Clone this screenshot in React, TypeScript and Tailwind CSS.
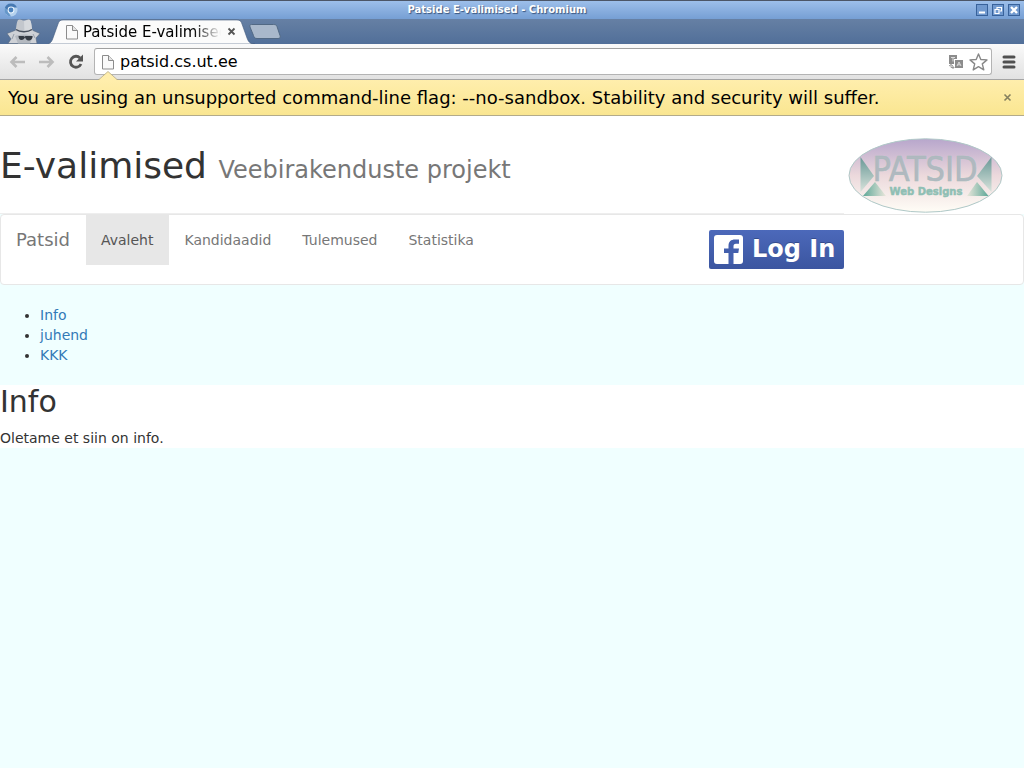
import type { ReactNode } from "react";

function PageIcon() {
  return (
    <svg width="12" height="16" viewBox="0 0 12 16" fill="#fafafa" stroke="#8c8c8c" className="shrink-0" aria-hidden="true">
      <path d="M.5 1.5h6l5 5v8.5H.5z" />
      <path d="M6.5 1.5v5h5" fill="#e4e4e4" />
    </svg>
  );
}

function WindowButton({ label, children }: { label: string; children: ReactNode }) {
  return (
    <button type="button" aria-label={label} className="flex h-3 w-3 items-center justify-center border border-[#38629b] bg-[#7099cf]">
      <svg width="10" height="10" viewBox="0 0 10 10" fill="none" stroke="#fff" aria-hidden="true">
        {children}
      </svg>
    </button>
  );
}

function TitleBar() {
  return (
    <div className="flex h-[19px] items-center border-t border-[#4c5667] bg-linear-to-b from-[#9dbfea] to-[#769fd4] pl-1">
      <svg width="14" height="14" viewBox="0 0 14 14" className="shrink-0" aria-hidden="true">
        <circle cx="7" cy="7" r="6.5" fill="#b5d2ee" />
        <path d="M.8 5A6.500 6.500 0 0 1 13 4.500H7L4 8z" fill="#4679b2" />
        <path d="M.8 5 4 8.500 7 13.500A6.500 6.500 0 0 1 .8 5z" fill="#6597ca" />
        <circle cx="7" cy="7" r="3.400" fill="#eaf4fd" />
        <circle cx="7" cy="7" r="2.400" fill="#4b82bd" />
      </svg>
      <div className="flex-1 text-center text-[10px] leading-4 font-bold text-white [text-shadow:1px_1px_1px_#38547d]">
        Patside E-valimised - Chromium
      </div>
      <div className="flex gap-1 pr-1">
        <WindowButton label="Minimize"><path d="M2 7.5h6" strokeWidth="2" /></WindowButton>
        <WindowButton label="Restore"><path d="M4 4V2.5h4.500V6H7M2 4.500h4v4H2z" strokeWidth="1.200" /></WindowButton>
        <WindowButton label="Close"><path d="m2 2 6 6m0-6L2 8" strokeWidth="2.400" /></WindowButton>
      </div>
    </div>
  );
}

function TabStrip() {
  return (
    <div className="flex h-[25px] bg-linear-to-b from-[#6680a4] to-[#516f99]">
      <svg width="48" height="25" viewBox="0 0 48 25" className="shrink-0" aria-hidden="true">
        <path d="M7 14.500 16 11h16l8 3.500-4 4.500 1 5.500H8l3-4.500z" fill="#ced1d6" stroke="#56667d" strokeWidth=".6" />
        <path d="M15 17c5-2 13-2 18 0l-3 7.500H18z" fill="#b4b9c0" />
        <path d="m12 20 2-5m21 4-2-4" stroke="#969eaa" strokeWidth="1" />
        <path d="M15.500 12c1-4 1-9 2.500-11 2-1.500 4 .5 6 .5s4-2 6-.5c1.500 2 1.500 7 2.500 11-5 2.500-12 2.500-17 0z" fill="#c3c7cd" />
        <path d="M24 2c2 0 4-2 6-1 1.500 2 1.500 7 2.500 11-2 1-5 2-8 2z" fill="#d6d9dd" />
        <path d="M16 10.500c4 3 12 3 16 0" fill="none" stroke="#464e5b" strokeWidth="1.400" />
        <path d="M18.500 17h5l1 .8 1-.8h7c.3 2.500-1.500 4.500-4 4.500-2 0-2.700-1.500-3.500-3-1 1.500-1.500 2.500-3.500 2.500s-3-1.500-3-4z" fill="#343a43" />
      </svg>
      <div className="relative h-[25px] w-52 shrink-0">
        <svg width="208" height="25" viewBox="0 0 208 25" className="absolute inset-0" aria-hidden="true">
          <path d="M0 25c3-1 4-3 5-6l5-14c1-3 2-4 5-4h174c3 0 4 1 5 4l5 14c1.500 4 3 6 8 6z" transform="translate(0 0)" fill="#fbfbfb" stroke="#435b7d" strokeWidth=".6" />
        </svg>
        <div className="relative flex h-full items-center pl-[18px]">
          <PageIcon />
          <span className="ml-[5px] w-[138px] overflow-hidden text-[15px] leading-5 whitespace-nowrap text-black [mask-image:linear-gradient(to_right,black_80%,transparent)]">
            Patside E-valimised
          </span>
          <button type="button" aria-label="Close tab" className="ml-1.5">
            <svg width="9" height="9" viewBox="0 0 9 9" fill="none" stroke="#555" strokeWidth="1.800" aria-hidden="true"><path d="m1.500 1.500 6 6m0-6-6 6" /></svg>
          </button>
        </div>
      </div>
      <button type="button" aria-label="New tab" className="-ml-2 self-start pt-[5px]">
        <svg width="34" height="16" viewBox="0 0 34 16" aria-hidden="true">
          <path d="M3.500.5h22c2 0 3 .5 3.500 2l3 9c.7 2 0 3-2 3H9c-2 0-3-1-3.500-3L2 3C1.500 1 2 .5 3.500.5z" fill="#a9b8cb" stroke="#526984" />
        </svg>
      </button>
    </div>
  );
}

function Toolbar() {
  return (
    <div className="flex h-9 items-center border-b border-[#a5a5a5] bg-linear-to-b from-[#fafafa] to-[#e2e2e2] px-2">
      <div className="flex w-[86px] shrink-0 items-center gap-3">
        <button type="button" aria-label="Back">
          <svg width="18" height="14" viewBox="0 0 18 14" fill="none" stroke="#bcbcbc" strokeWidth="2.600" aria-hidden="true"><path d="M17 7H4M8.500 2 3.500 7l5 5" /></svg>
        </button>
        <button type="button" aria-label="Forward">
          <svg width="18" height="14" viewBox="0 0 18 14" fill="none" stroke="#bcbcbc" strokeWidth="2.600" aria-hidden="true"><path d="M1 7h13M9.500 2l5 5-5 5" /></svg>
        </button>
        <button type="button" aria-label="Reload">
          <svg width="17" height="16" viewBox="0 0 17 16" aria-hidden="true">
            <path d="M13 10A5.500 5.500 0 1 1 12 4" fill="none" stroke="#555" strokeWidth="2.800" />
            <path d="M15 .5v7H8z" fill="#555" />
          </svg>
        </button>
      </div>
      <div className="flex h-[27px] flex-1 items-center rounded-[3px] border border-[#b4b4b4] border-t-[#a0a0a0] bg-white pr-[3px] pl-[7px]">
        <PageIcon />
        <input aria-label="Address" defaultValue="patsid.cs.ut.ee" className="ml-1.5 min-w-0 flex-1 bg-transparent text-[16px] leading-5 text-black outline-none" />
        <button type="button" aria-label="Translate" className="mr-1.5">
          <svg width="14" height="14" viewBox="0 0 14 14" aria-hidden="true">
            <path d="M0 0h8v4H5v5H0z" fill="#8c8c8c" />
            <path d="M2 2.500h4M4 2.500v4" stroke="#ddd" />
            <path d="M6 5h8v8H6z" fill="#8c8c8c" />
            <path d="m8 11 2-4 2 4M8.800 9.800h2.400" fill="none" stroke="#ddd" />
            <path d="M2 9.500v3h3M0 11l2-1.500L4 11M3.500 14 5 12.500 3.500 11" fill="none" stroke="#999" />
          </svg>
        </button>
        <button type="button" aria-label="Bookmark">
          <svg width="19" height="18" viewBox="0 0 19 18" fill="#fff" stroke="#888" strokeWidth="1.400" strokeLinejoin="round" aria-hidden="true"><path d="m9.500 1 2.300 5.500 6.200.4-4.700 4 1.500 6-5.300-3.300-5.300 3.300 1.500-6L1 6.900l6.200-.4z" /></svg>
        </button>
      </div>
      <button type="button" aria-label="Menu" className="ml-2.5">
        <svg width="14" height="14" viewBox="0 0 14 14" stroke="#505050" strokeWidth="3" strokeLinecap="round" aria-hidden="true"><path d="M2 2h10M2 7h10M2 12h10" /></svg>
      </button>
    </div>
  );
}

function InfoBar() {
  return (
    <div className="relative flex h-9 items-center justify-between border-b border-[#b3ab8a] bg-linear-to-b from-[#ffeeac] to-[#fae691] pr-3 pl-2">
      <svg width="20" height="10" viewBox="0 0 20 10" className="absolute -top-[9px] left-[98px]" aria-hidden="true">
        <path d="M0 9.500 10 .5l10 9z" fill="#ffeeac" />
        <path d="M0 8.500h1L10 .5l9 8h1" fill="none" stroke="#b5aa83" strokeWidth=".8" />
      </svg>
      <p className="text-[18px] leading-6 text-black">
        You are using an unsupported command-line flag: --no-sandbox. Stability and security will suffer.
      </p>
      <button type="button" aria-label="Dismiss">
        <svg width="9" height="9" viewBox="0 0 9 9" fill="none" stroke="#85805e" strokeWidth="1.600" aria-hidden="true"><path d="m1.500 1.500 6 6m0-6-6 6" /></svg>
      </button>
    </div>
  );
}

function PatsidLogo() {
  return (
    <svg width="156" height="76" viewBox="0 0 156 76" role="img" aria-label="Patsid Web Designs">
      <defs>
        <linearGradient id="oval" x2="0" y2="1"><stop stopColor="#b7a6cc" /><stop offset=".5" stopColor="#ecd9dc" /><stop offset="1" stopColor="#fffdf6" /></linearGradient>
        <linearGradient id="side" x2="0" y2="1"><stop stopColor="#689896" /><stop offset="1" stopColor="#d9e3dc" /></linearGradient>
        <linearGradient id="leftFoot"><stop stopColor="#5da797" /><stop offset="1" stopColor="#eae7dc" /></linearGradient>
        <linearGradient id="rightFoot"><stop stopColor="#eae7dc" /><stop offset="1" stopColor="#5da797" /></linearGradient>
      </defs>
      <ellipse cx="77.500" cy="37.500" rx="76.500" ry="36.700" fill="url(#oval)" stroke="#afc8c7" />
      <path d="M12.500 19 26 38 12.500 54z" fill="url(#side)" />
      <path d="M143.500 19 129 38l14.500 16z" fill="url(#side)" />
      <path d="M15 58 27 44l11 14z" fill="url(#leftFoot)" />
      <path d="M119 58 129 44l11.500 14z" fill="url(#rightFoot)" />
      <text x="77" y="43" textAnchor="middle" fontSize="34" fill="#b1b8c0" stroke="#a5bdbc" strokeWidth=".5" className="font-['Liberation_Sans_Narrow','DejaVu_Sans_Condensed',sans-serif]">PATSID</text>
      <text x="78" y="57" textAnchor="middle" fontSize="10" fontWeight="bold" fill="#8fbfb4" stroke="#8fbfb4" strokeWidth=".5" className="font-['DejaVu_Sans',sans-serif]">Web Designs</text>
    </svg>
  );
}

const navItems = ["Avaleht", "Kandidaadid", "Tulemused", "Statistika"];
const sideLinks = ["Info", "juhend", "KKK"];

function Site() {
  return (
    <div className="flex-1 bg-[#f0ffff] text-sm text-[#333]">
      <header className="flex h-[98px] bg-white">
        <div className="flex-1 border-b border-[#eee] pt-[30px]">
          <h1 className="text-[36px] leading-10">
            E-valimised <small className="text-[24px] leading-6 text-[#777]">Veebirakenduste projekt</small>
          </h1>
        </div>
        <div className="flex w-[180px] shrink-0 items-start pt-[22px] pl-1">
          <PatsidLogo />
        </div>
      </header>
      <nav className="flex h-[71px] items-start rounded-sm border border-[#e7e7e7] bg-white pr-[179px]">
        <a href="#home" className="py-[15px] pr-4 pl-[15px] text-[18px] leading-5 text-[#777]">Patsid</a>
        <ul className="flex flex-1">
          {navItems.map((item, i) => (
            <li key={item}>
              <a href={"#" + item} className={"block py-[15px] pr-4 pl-[15px] leading-5 " + (i === 0 ? "bg-[#e7e7e7] text-[#555]" : "text-[#777]")}>{item}</a>
            </li>
          ))}
        </ul>
        <button type="button" className="mt-[15px] flex h-[39px] w-[135px] items-center rounded-xs bg-linear-to-b from-[#4c69ba] to-[#3b55a0] pl-[5px]">
          <svg width="29" height="29" viewBox="0 0 29 29" className="shrink-0" aria-hidden="true">
            <rect width="29" height="29" rx="3" fill="#fff" />
            <path d="M14.500 29V18H10v-4.500h4.500V11c0-4.500 2.500-6.500 6.500-6.500h4v4.300h-3c-2 0-2.500 1-2.500 2.500v2.200H25L24.300 18h-4.800v11z" fill="#435fad" />
          </svg>
          <span className="pb-0.5 pl-[9px] text-[24px] leading-8 font-bold whitespace-nowrap text-white [text-shadow:0_-1px_0_#354c8c]">Log In</span>
        </button>
      </nav>
      <ul className="list-disc pt-5 pb-5 pl-10 leading-5">
        {sideLinks.map((item) => (
          <li key={item}><a href={"#" + item} className="text-[#337ab7]">{item}</a></li>
        ))}
      </ul>
      <main className="bg-white">
        <h2 className="pb-2.5 text-[30px] leading-[33px]">Info</h2>
        <p className="leading-5">Oletame et siin on info.</p>
      </main>
    </div>
  );
}

export default function App() {
  return (
    <div className="flex min-h-screen flex-col font-['DejaVu_Sans',sans-serif]">
      <TitleBar />
      <TabStrip />
      <Toolbar />
      <InfoBar />
      <Site />
    </div>
  );
}
